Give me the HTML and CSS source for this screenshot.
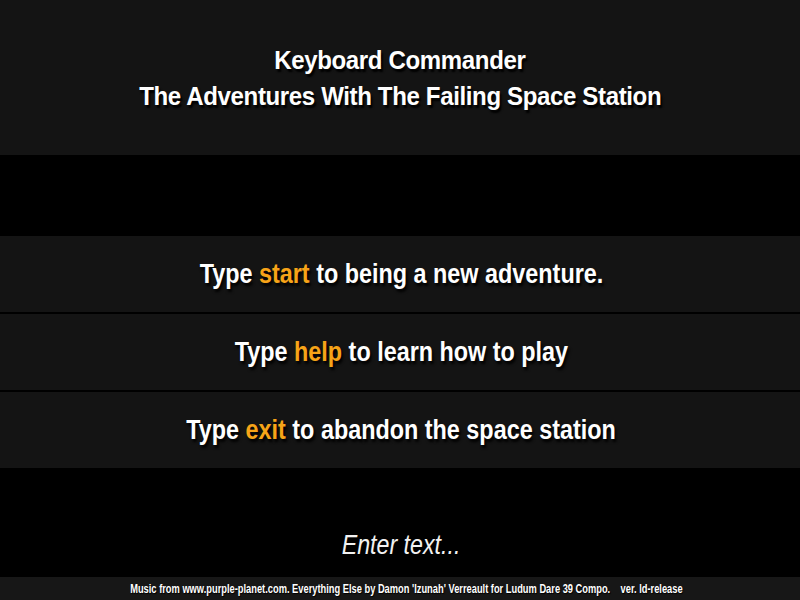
FILE: index.html
```html
<!DOCTYPE html>
<html>
<head>
<meta charset="utf-8">
<link rel="stylesheet" href="styles.css">
</head>
<body>
<div class="screen">
  <header class="title">
    <div class="title-line">Keyboard Commander</div>
    <div class="title-line">The Adventures With The Failing Space Station</div>
  </header>
  <div class="menu">
    <div class="option"><span class="narrow">Type <span class="cmd">start</span> to being a new adventure.</span></div>
    <div class="option"><span class="narrow">Type <span class="cmd">help</span> to learn how to play</span></div>
    <div class="option"><span class="narrow">Type <span class="cmd">exit</span> to abandon the space station</span></div>
  </div>
  <div class="prompt"><span class="prompt-text">Enter text...</span></div>
  <footer class="credits"><span class="credits-text">Music from www.purple-planet.com. Everything Else by Damon 'Izunah' Verreault for Ludum Dare 39 Compo.&nbsp;&nbsp;&nbsp;&nbsp;ver. ld-release</span></footer>
</div>
</body>
</html>
```
FILE: styles.css
```css
html, body {
  margin: 0;
  padding: 0;
  background: #000;
}
.screen {
  width: 800px;
  height: 600px;
  display: flex;
  flex-direction: column;
  font-family: "Liberation Sans", Arial, sans-serif;
  color: #fff;
  overflow: hidden;
}
.title {
  height: 155px;
  background: #141414;
  display: flex;
  flex-direction: column;
  align-items: center;
  padding-top: 42px;
  box-sizing: border-box;
}
.title-line {
  font-weight: bold;
  font-size: 26px;
  line-height: 36px;
  letter-spacing: -0.4px;
  transform: scaleX(0.925);
  white-space: nowrap;
  text-shadow: 2px 3px 2px #000;
}
.menu {
  margin-top: 81px;
  display: flex;
  flex-direction: column;
  gap: 2px;
}
.option {
  height: 76px;
  background: #141414;
  display: flex;
  align-items: center;
  justify-content: center;
  font-weight: bold;
  font-size: 28px;
  white-space: nowrap;
  text-shadow: 2px 3px 3px #000;
}
.narrow {
  display: inline-block;
  transform: scaleX(0.835);
  padding-left: 3px;
}
.cmd {
  color: #f7a418;
}
.prompt {
  flex: 1;
  display: flex;
  align-items: center;
  justify-content: center;
  padding-top: 46px;
  padding-left: 2px;
  font-style: italic;
  font-size: 27px;
  color: #f2f2f2;
  white-space: nowrap;
}
.prompt-text {
  display: inline-block;
  transform: scaleX(0.86);
}
.credits {
  height: 23px;
  background: #171717;
  display: flex;
  align-items: center;
  justify-content: center;
  font-weight: bold;
  font-size: 12px;
  white-space: nowrap;
  padding-left: 12px;
  text-shadow: 1px 1px 1px #000;
}
.credits-text {
  display: inline-block;
  transform: scaleX(0.775);
}
```
